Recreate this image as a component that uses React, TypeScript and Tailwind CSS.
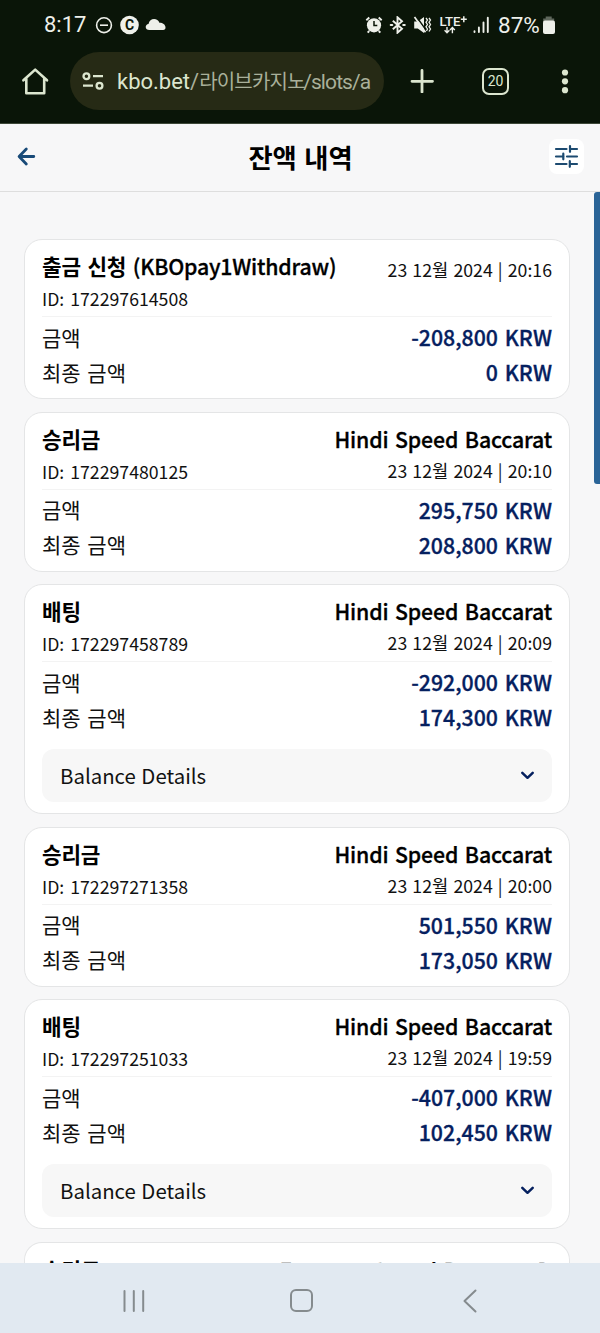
import React from "react";

type Transaction = {
  title: string;
  method?: string;
  id: string;
  game?: string;
  date: string;
  amount: string;
  finalAmount: string;
  details?: boolean;
};

const transactions: Transaction[] = [
  {
    title: "출금 신청",
    method: "(KBOpay1Withdraw)",
    id: "172297614508",
    date: "23 12월 2024 | 20:16",
    amount: "-208,800 KRW",
    finalAmount: "0 KRW",
  },
  {
    title: "승리금",
    id: "172297480125",
    game: "Hindi Speed Baccarat",
    date: "23 12월 2024 | 20:10",
    amount: "295,750 KRW",
    finalAmount: "208,800 KRW",
  },
  {
    title: "배팅",
    id: "172297458789",
    game: "Hindi Speed Baccarat",
    date: "23 12월 2024 | 20:09",
    amount: "-292,000 KRW",
    finalAmount: "174,300 KRW",
    details: true,
  },
  {
    title: "승리금",
    id: "172297271358",
    game: "Hindi Speed Baccarat",
    date: "23 12월 2024 | 20:00",
    amount: "501,550 KRW",
    finalAmount: "173,050 KRW",
  },
  {
    title: "배팅",
    id: "172297251033",
    game: "Hindi Speed Baccarat",
    date: "23 12월 2024 | 19:59",
    amount: "-407,000 KRW",
    finalAmount: "102,450 KRW",
    details: true,
  },
];

function StatusBar() {
  return (
    <div className="flex h-[50px] items-center pl-[44px] pr-[44px] text-[#eef0ea]">
      <span className="w-[51px] text-[22px] leading-[50px]">8:17</span>
      <svg width="18" height="18" viewBox="0 0 18 18" fill="none" stroke="currentColor" strokeWidth="1.6">
        <circle cx="9" cy="9.2" r="7.4" />
        <path d="M5 9.2h8" />
      </svg>
      <svg className="ml-[6px]" width="20" height="20" viewBox="0 0 20 20">
        <circle cx="10.5" cy="10" r="9.3" fill="currentColor" />
        <text x="10.5" y="15" textAnchor="middle" fontSize="14" fontWeight="700" fill="#0a1508">
          C
        </text>
      </svg>
      <svg className="ml-[6px]" width="21" height="20" viewBox="0 0 21 20" fill="currentColor">
        <path d="M4.4 15C2.2 15 .7 13.6.7 11.9c0-1.6 1.2-2.8 2.8-3C4.2 5.9 6.4 4.1 9.1 4.1c2.4 0 4.4 1.4 5.3 3.6 2.9-.2 5.9 1.5 6.1 4.6.1 1.7-.8 2.7-2.3 2.7z" />
      </svg>

      <div className="ml-auto flex items-center">
        <svg width="18" height="18" viewBox="0 0 18 18">
          <circle cx="9" cy="9.3" r="7.1" fill="currentColor" />
          <path d="M1.3 4.2 4.3 1.5M13.7 1.5l3 2.7M4.2 15l-1.5 1.7M13.8 15l1.5 1.7" stroke="currentColor" strokeWidth="1.9" fill="none" />
          <path d="M9 5v4.6h3.3" stroke="#0a1508" strokeWidth="1.5" fill="none" />
        </svg>
        <svg className="ml-[6px]" width="18" height="18" viewBox="0 0 18 18" fill="none" stroke="currentColor" strokeWidth="1.9">
          <path d="m3.8 4.7 9.2 8-4.5 4V1.3l4.5 4-9.2 8" />
          <path d="M1.8 9h1.4M14.3 9h1.4" strokeWidth="2.2" strokeLinecap="round" />
        </svg>
        <svg className="ml-[6px]" width="19" height="18" viewBox="0 0 19 18">
          <path d="M1.2 5.6h3.6L11 1v16l-6.200-4.600H1.200z" fill="currentColor" />
          <path d="m3 0 11 15.500" stroke="#0a1508" strokeWidth="1.5" />
          <path d="m1.500 1 11 15.300" stroke="currentColor" strokeWidth="1.7" />
          <path d="m13 2 1.500 2-1.500 2.200 1.500 2.300L13 10.800l1.500 2.200-1 2M16 2l1.500 2L16 6.200l1.500 2.300-1.500 2.300 1.500 2.200-1.500 2.500" stroke="currentColor" strokeWidth="1.3" fill="none" />
        </svg>
        <svg className="ml-[7px]" width="30" height="20" viewBox="0 0 30 20">
          <text x="0.5" y="10.5" fontSize="13" fontWeight="500" textLength="21" lengthAdjust="spacingAndGlyphs" fill="currentColor">
            LTE
          </text>
          <path d="M21.8 4.2h6M24.8 1.2v6" stroke="currentColor" strokeWidth="1.5" />
          <path d="M8 12v5.7M5.6 15.3 8 17.8l2.4-2.5M13.4 18.2v-5.7M11 15l2.4-2.5 2.4 2.5" stroke="currentColor" strokeWidth="1.4" fill="none" />
        </svg>
        <svg className="ml-[4px]" width="17" height="18" viewBox="0 0 17 18" fill="none" stroke="currentColor" strokeWidth="1.9" strokeLinecap="round">
          <path d="M1.5 15.3v.7M5.9 11.5V16M10.5 6.5V16M14.800 1.700V16" />
        </svg>
        <span className="ml-[8px] w-[44px] text-[22.5px] leading-[50px]">87%</span>
        <svg width="14" height="20" viewBox="0 0 14 20">
          <path d="M3.7 1.5h6v2h2.500v4H1.200v-4h2.500z" fill="#5f675c" />
          <rect x="1" y="5.500" width="12" height="13.500" rx="2" fill="currentColor" />
        </svg>
      </div>
    </div>
  );
}

function BrowserBar() {
  return (
    <div className="flex h-[74px] items-start border-b border-[#3d4838] pt-[2px] text-[#dce6cf]">
      <svg className="ml-[20px] mt-[14px]" width="30" height="30" viewBox="0 0 30 30" fill="none" stroke="currentColor" strokeWidth="2.6" strokeLinejoin="round" strokeLinecap="round">
        <path d="M3.4 14.3 15.2 3.600 27 14.300M6.300 12.500V27.200h17.900V12.500" />
      </svg>
      <div className="ml-[20px] flex h-[58px] w-[314px] items-center rounded-full bg-[#262a15] pl-[12px]">
        <svg width="22" height="20" viewBox="0 0 22 20" fill="none" stroke="currentColor" strokeWidth="2.3">
          <circle cx="4.4" cy="5.2" r="2.9" />
          <path d="M11 5.2h10M1 14.700h10" />
          <circle cx="17.500" cy="14.700" r="2.900" />
        </svg>
        <div className="ml-[13px] flex items-baseline whitespace-nowrap pt-[2px] text-[22px]">
          <span>kbo.bet</span>
          <span className="text-[#a9b09a]">/</span>
          <span className="w-[104px] text-[20px] tracking-[-0.8px] text-[#a9b09a]">라이브카지노</span>
          <span className="text-[21px] tracking-[-0.9px] text-[#a9b09a]">/slots/a</span>
        </div>
      </div>
      <svg className="ml-[26px] mt-[17px]" width="24" height="24" viewBox="0 0 24 24" stroke="currentColor" strokeWidth="2.8" strokeLinecap="round">
        <path d="M2 12.300h20.500M12 1.500V23" />
      </svg>
      <div className="ml-[48px] mt-[16px] flex h-[27px] w-[27px] items-center justify-center rounded-[7px] border-[2.6px] border-[#dce6cf] text-[14px]">
        20
      </div>
      <svg className="ml-[52px] mt-[16px]" width="8" height="27" viewBox="0 0 8 27" fill="currentColor">
        <circle cx="4" cy="4.5" r="3.1" />
        <circle cx="4" cy="13.3" r="3.1" />
        <circle cx="4" cy="22.2" r="3.1" />
      </svg>
    </div>
  );
}

function PageHeader() {
  return (
    <header className="flex h-[68px] items-center justify-between border-b border-[#dedede] pl-[17px] pr-[16px]">
      <div className="w-[35px] pb-[2px]">
        <svg width="20" height="20" viewBox="0 0 20 20" fill="none" stroke="#184a78" strokeWidth="2.8" strokeLinecap="round" strokeLinejoin="round">
          <path d="M16.800 9.500H2.500M9.300 2.100 2.100 9.500l7.200 7.400" />
        </svg>
      </div>
      <h1 className="pb-[2px] text-[26.3px] font-bold leading-[36px] [word-spacing:1.5px] text-black">잔액 내역</h1>
      <button className="mb-[2px] flex h-[35px] w-[35px] items-center justify-center rounded-lg bg-white">
        <svg width="25" height="25" viewBox="0 0 25 25" fill="none" stroke="#1c4a70" strokeWidth="2.2" strokeLinecap="round">
          <path d="M2 5h10.500M16 2.200v5.600M16 5h7M2 12.500h7.500M9.300 9.700v5.600M13 12.500H23M2 20h10.500M15.800 17.200v5.600M15.800 20H23" />
        </svg>
      </button>
    </header>
  );
}

function TransactionCard({ item }: { item: Transaction }) {
  return (
    <div
      className={`shrink-0 rounded-[18px] border border-[#e4e5e6] bg-white px-[17px] pt-[8px] text-[21.3px] [word-spacing:2px] text-[#111] ${
        item.details ? "h-[230px]" : "h-[160px]"
      }`}
    >
      <div className="flex h-[69px] justify-between border-b border-[#f3f3f3]">
        <div>
          <div className="h-[35px] whitespace-nowrap font-medium leading-[35px] tracking-[-0.2px] text-black [-webkit-text-stroke:0.3px]">
            <span className="font-bold [-webkit-text-stroke:0]">{item.title}</span>
            {item.method && ` ${item.method}`}
          </div>
          <div className="text-[17.7px] leading-[30px]">ID: {item.id}</div>
        </div>
        <div className="text-right">
          {item.game && (
            <div className="h-[35px] whitespace-nowrap font-medium leading-[35px] tracking-[-0.15px] text-black [-webkit-text-stroke:0.3px]">
              {item.game}
            </div>
          )}
          <div
            className={`text-[17.7px] [word-spacing:1.2px] ${
              item.game ? "leading-[29px]" : "leading-[43px]"
            }`}
          >
            {item.date}
          </div>
        </div>
      </div>
      <div className="pt-[3px]">
        <div className="flex h-[35px] items-center justify-between">
          <span className="text-[21px]">금액</span>
          <span className="pb-[1px] font-medium text-[#05205f] [-webkit-text-stroke:0.3px]">{item.amount}</span>
        </div>
        <div className="flex h-[35px] items-center justify-between">
          <span className="text-[21px]">최종 금액</span>
          <span className="pb-[1px] font-medium text-[#05205f] [-webkit-text-stroke:0.3px]">{item.finalAmount}</span>
        </div>
      </div>
      {item.details && (
        <button className="mt-[14px] flex h-[53px] w-full items-center justify-between rounded-[12px] bg-[#f7f7f7] pl-[18px] pr-[17px]">
          <span className="text-[20.4px] [word-spacing:1px]">Balance Details</span>
          <svg width="15" height="11" viewBox="0 0 15 11" fill="none" stroke="#05205f" strokeWidth="2.5" strokeLinecap="round" strokeLinejoin="round">
            <path d="m2.300 2.800 5.200 5 5.200-5" />
          </svg>
        </button>
      )}
    </div>
  );
}

// Top of the next card, the rest is scrolled below the navigation bar
function NextCard() {
  return (
    <div className="flex h-[40px] shrink-0 justify-between rounded-t-[18px] border border-b-0 border-[#e4e5e6] bg-white px-[17px] pt-[9px] text-[21.3px] font-medium leading-[35px] tracking-[-0.15px] [word-spacing:2px] text-black">
      <span className="font-bold">승리금</span>
      <span className="[-webkit-text-stroke:0.3px]">Emperor Speed Baccarat D</span>
    </div>
  );
}

function NavigationBar() {
  return (
    <nav className="flex h-[70px] items-center bg-[#e1e9f1] text-[#858b8e]">
      <svg className="ml-[122px] mt-[5px]" width="24" height="26" viewBox="0 0 24 26" stroke="currentColor" strokeWidth="2" strokeLinecap="round">
        <path d="M2.5 3v20M11.800 3v20M21.200 3v20" />
      </svg>
      <div className="ml-[144px] mt-[5px] h-[23px] w-[23px] rounded-[6px] border-2 border-current" />
      <svg className="ml-[149px] mt-[5px]" width="16" height="26" viewBox="0 0 16 26" fill="none" stroke="currentColor" strokeWidth="2" strokeLinecap="round" strokeLinejoin="round">
        <path d="M13.5 2.500 2.500 13l11 10.500" />
      </svg>
    </nav>
  );
}

export default function App() {
  return (
    <div className="flex h-[1333px] w-[600px] flex-col overflow-hidden bg-[#f7f7f8] font-['Noto_Sans_CJK_KR',sans-serif]">
      <div className="bg-[#0a1508] font-[Roboto,'Noto_Sans_CJK_KR',sans-serif]">
        <StatusBar />
        <BrowserBar />
      </div>
      <PageHeader />
      <main className="relative min-h-0 flex-1 overflow-hidden">
        <div className="flex flex-col gap-[12.5px] pl-[24px] pr-[30px] pt-[47px]">
          {transactions.map((item) => (
            <TransactionCard key={item.id} item={item} />
          ))}
          <NextCard />
        </div>
        <div className="absolute right-0 top-0 h-[292px] w-[6px] rounded-l-[3px] bg-[#2a6497]" />
      </main>
      <NavigationBar />
    </div>
  );
}
